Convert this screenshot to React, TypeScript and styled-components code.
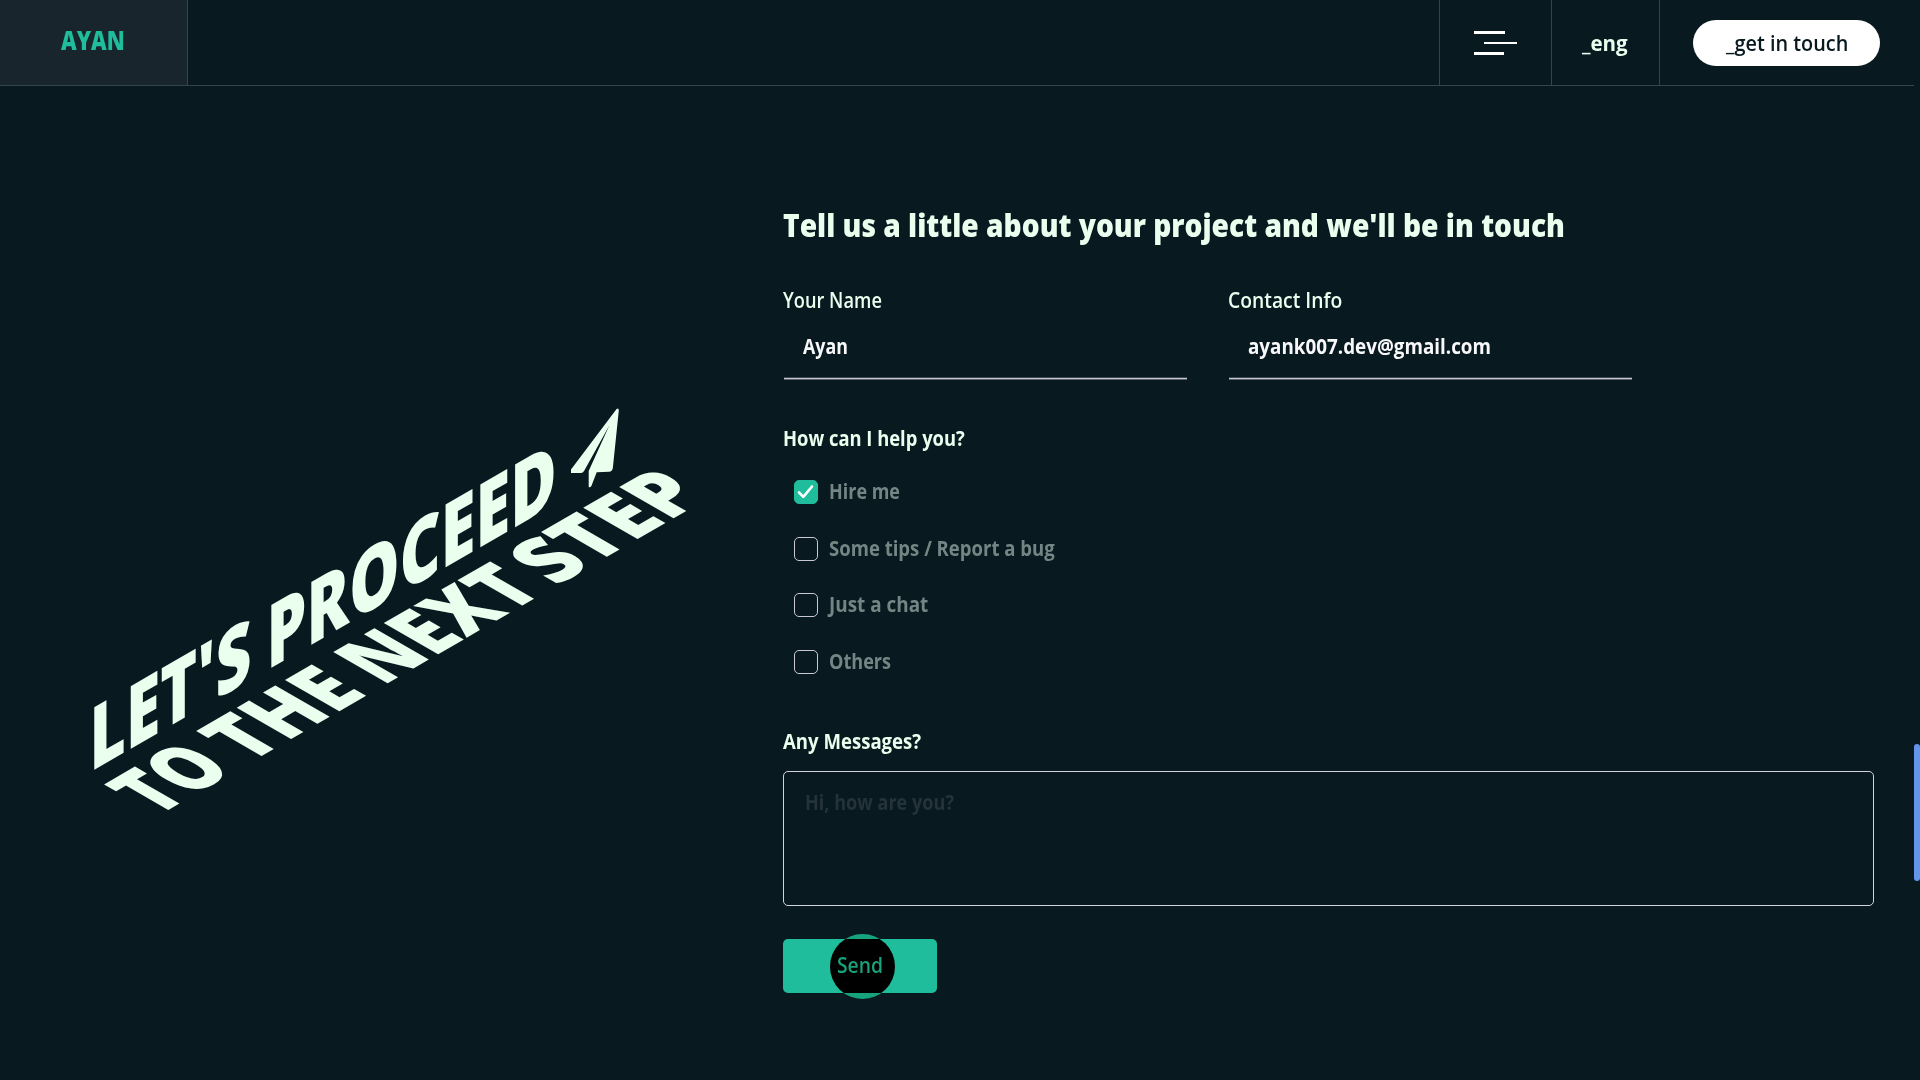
import React, { useLayoutEffect, useRef, useState } from "react";
import styled, { createGlobalStyle } from "styled-components";

const color = {
  bg: "#081920",
  panel: "#18252d",
  line: "#36444b",
  mint: "#eaffee",
  accent: "#1fbd9c",
  muted: "#748684",
  rule: "#c9c7d8",
};

const Global = createGlobalStyle`
  * { box-sizing: border-box; }
  html, body { margin: 0; background: ${color.bg}; overflow: hidden; }
  body { font-family: "Open Sans", "Noto Sans", sans-serif; color: ${color.mint}; }
`;

const FitBox = styled.span<{ $w: number }>`
  display: block;
  width: ${(p) => p.$w}px;
  white-space: nowrap;
`;
const FitInner = styled.span`
  display: inline-block;
  transform-origin: 0 50%;
`;

/* Condenses a line of text horizontally to the given width. */
function Fit({ w, dy = 0, children }: { w: number; dy?: number; children: string }) {
  const ref = useRef<HTMLSpanElement>(null);
  const [scale, setScale] = useState(1);
  useLayoutEffect(() => {
    if (ref.current) setScale(w / ref.current.offsetWidth);
  }, [w, children]);
  return (
    <FitBox $w={w}>
      <FitInner ref={ref} style={{ transform: `translateY(${dy}px) scaleX(${scale})` }}>
        {children}
      </FitInner>
    </FitBox>
  );
}

const Page = styled.div`
  height: 1080px;
  display: grid;
  grid-template-columns: 1914px 6px;
  background: ${color.bg};
`;
const Content = styled.div`
  display: flex;
  flex-direction: column;
`;
const Header = styled.header`
  height: 86px;
  display: flex;
  border-bottom: 1px solid ${color.line};
`;
const Logo = styled.div`
  width: 188px;
  padding: 23px 0 0 61px;
  background: ${color.panel};
  border-right: 1px solid ${color.line};
  color: ${color.accent};
  font-size: 26px;
  line-height: 34px;
  font-weight: 800;
`;
const Spacer = styled.div`
  flex: 1;
`;
const HeaderCell = styled.div<{ $w: number; $pad: number }>`
  width: ${(p) => p.$w}px;
  padding-left: ${(p) => p.$pad}px;
  border-left: 1px solid ${color.line};
  display: flex;
  align-items: center;
  font-size: 21px;
  line-height: 28px;
  font-weight: 700;
`;
const MenuIcon = styled.div`
  display: flex;
  flex-direction: column;
  gap: 8px;
  padding-top: 1px;
`;
const MenuBar = styled.i<{ $w: number; $x: number }>`
  width: ${(p) => p.$w}px;
  height: 2.6px;
  margin-left: ${(p) => p.$x}px;
  background: #fff;
`;
const TouchButton = styled.button`
  width: 187px;
  height: 46px;
  padding: 0 0 2px 33px;
  border: 0;
  border-radius: 23px;
  background: #fff;
  color: ${color.bg};
  font: 600 21px/28px "Open Sans", "Noto Sans", sans-serif;
  text-align: left;
`;

const Main = styled.main`
  flex: 1;
  display: grid;
  grid-template-columns: 783px 1091px;
`;
const Banner = styled.div`
  padding: 304px 0 0 80px;
`;
const Lettering = styled.svg`
  display: block;
  width: 620px;
  height: 440px;
  overflow: visible;
  fill: ${color.mint};
  font-family: "Open Sans", "Noto Sans", sans-serif;
  font-weight: 800;
  font-size: 87.7px;
`;

const Form = styled.form`
  padding-top: 117px;
`;
const Title = styled.h1`
  margin: 0 0 38px;
  font-size: 32px;
  line-height: 44px;
  font-weight: 800;
`;
const Fields = styled.div`
  display: flex;
  gap: 41px;
  margin-bottom: 44px;
`;
const Field = styled.div`
  width: 404px;
`;
const Label = styled.div<{ $weight?: number }>`
  font-size: 21px;
  line-height: 28px;
  font-weight: ${(p) => p.$weight ?? 600};
`;
const Value = styled.div`
  margin: 19px 0 17px;
  padding-left: 20px;
  font-size: 21px;
  line-height: 28px;
  font-weight: 700;
  color: #f8f8fa;
`;
const Rule = styled.div`
  height: 3px;
  margin-left: 1px;
  background: linear-gradient(#3b4651 1px, ${color.rule} 1px 2px, #59616c 2px);
`;
const Options = styled.div`
  display: flex;
  flex-direction: column;
  gap: 28.67px;
  margin: 26px 0 50px;
  padding-left: 11px;
`;
const Option = styled.div`
  height: 28px;
  display: flex;
  align-items: center;
  gap: 11px;
  color: ${color.muted};
  font-size: 21px;
  line-height: 26px;
  font-weight: 700;
`;
const OptionText = styled.div`
  padding-bottom: 2px;
`;
const Check = styled.div<{ $on: boolean }>`
  width: 24px;
  height: 24px;
  border-radius: 5px;
  border: 1px solid ${(p) => (p.$on ? color.accent : color.rule)};
  background: ${(p) => (p.$on ? color.accent : "transparent")};
  svg { display: block; }
`;
const Message = styled.div`
  height: 135px;
  margin: 17px 0 33px;
  padding: 15px 0 0 21px;
  border: 1px solid #d0d5dc;
  border-radius: 5px;
  color: #25323a;
  font-size: 21px;
  line-height: 28px;
  font-weight: 700;
`;
const SendWrap = styled.div`
  position: relative;
  width: 154px;
`;
const SendButton = styled.button`
  display: block;
  width: 154px;
  height: 54px;
  padding: 0 0 3px 54px;
  border: 0;
  border-radius: 5px;
  background: ${color.accent};
  color: ${color.bg};
  font: 600 21px/28px "Open Sans", "Noto Sans", sans-serif;
  text-align: left;
`;
const Cursor = styled.div`
  position: absolute;
  left: 47px;
  top: -5px;
  width: 65px;
  height: 65px;
  border-radius: 50%;
  background: ${color.accent};
  mix-blend-mode: difference;
`;
const Track = styled.div`
  padding-top: 744px;
`;
const Thumb = styled.div`
  height: 137px;
  border-radius: 3px;
  background: cornflowerblue;
`;

const options = [
  { text: "Hire me", w: 71, on: true },
  { text: "Some tips / Report a bug", w: 226, on: false },
  { text: "Just a chat", w: 99, on: false },
  { text: "Others", w: 62, on: false },
];

const upper = [
  { t: "LET'S", x: 0, w: 162 },
  { t: "PROCEED", x: 177, w: 290 },
];
const lower = [
  { t: "TO", x: 0, w: 79 },
  { t: "THE", x: 92, w: 120 },
  { t: "NEXT", x: 226, w: 163 },
  { t: "STEP", x: 399, w: 154 },
];

export default function App() {
  return (
    <>
      <Global />
      <Page>
        <Content>
          <Header>
            <Logo><Fit w={64}>AYAN</Fit></Logo>
            <Spacer />
            <HeaderCell $w={112} $pad={34}>
              <MenuIcon>
                <MenuBar $w={31} $x={0} />
                <MenuBar $w={33} $x={10} />
                <MenuBar $w={30} $x={0} />
              </MenuIcon>
            </HeaderCell>
            <HeaderCell $w={108} $pad={30}><Fit w={46}>_eng</Fit></HeaderCell>
            <HeaderCell $w={255} $pad={33}>
              <TouchButton type="button"><Fit w={122} dy={0.6}>_get in touch</Fit></TouchButton>
            </HeaderCell>
          </Header>
          <Main>
            <Banner>
              <Lettering viewBox="80 390 620 440">
                <g transform="matrix(1 -0.577 0 1 89.6 772.6)">
                  {upper.map((s) => (
                    <text key={s.t} x={s.x} y={0} textLength={s.w} lengthAdjust="spacingAndGlyphs">{s.t}</text>
                  ))}
                </g>
                <g transform="matrix(1 -0.577 0.867 0.5 157 816.4)">
                  {lower.map((s) => (
                    <text key={s.t} x={s.x} y={0} textLength={s.w} lengthAdjust="spacingAndGlyphs">{s.t}</text>
                  ))}
                </g>
                <path d="M616.4 409.2Q618.6 407.4 618.8 410.5L612.9 467.5Q612.6 471.5 609 471.8L596.7 472.3L591.5 485.8Q589.9 488.3 588.7 486.8V471L609.3 425.5L584.2 470.8Q583 473 581 473H571V469.5Z" />
              </Lettering>
            </Banner>
            <Form>
              <Title><Fit w={782}>Tell us a little about your project and we'll be in touch</Fit></Title>
              <Fields>
                <Field>
                  <Label><Fit w={99} dy={0.6}>Your Name</Fit></Label>
                  <Value><Fit w={45}>Ayan</Fit></Value>
                  <Rule />
                </Field>
                <Field>
                  <Label><Fit w={114} dy={0.6}>Contact Info</Fit></Label>
                  <Value><Fit w={243}>ayank007.dev@gmail.com</Fit></Value>
                  <Rule />
                </Field>
              </Fields>
              <Label $weight={700}><Fit w={182}>How can I help you?</Fit></Label>
              <Options>
                {options.map((o) => (
                  <Option key={o.text}>
                    <Check $on={o.on}>
                      {o.on && (
                        <svg width="22" height="22" viewBox="0 0 22 22" fill="none" stroke="#fff" strokeWidth="2.6" strokeLinecap="round" strokeLinejoin="round">
                          <path d="M4 11.5L8.3 15.8L17 5.5" />
                        </svg>
                      )}
                    </Check>
                    <OptionText><Fit w={o.w}>{o.text}</Fit></OptionText>
                  </Option>
                ))}
              </Options>
              <Label $weight={700}><Fit w={138} dy={0.6}>Any Messages?</Fit></Label>
              <Message><Fit w={149} dy={0.6}>Hi, how are you?</Fit></Message>
              <SendWrap>
                <SendButton type="button"><Fit w={46} dy={0.6}>Send</Fit></SendButton>
                <Cursor />
              </SendWrap>
            </Form>
          </Main>
        </Content>
        <Track><Thumb /></Track>
      </Page>
    </>
  );
}
